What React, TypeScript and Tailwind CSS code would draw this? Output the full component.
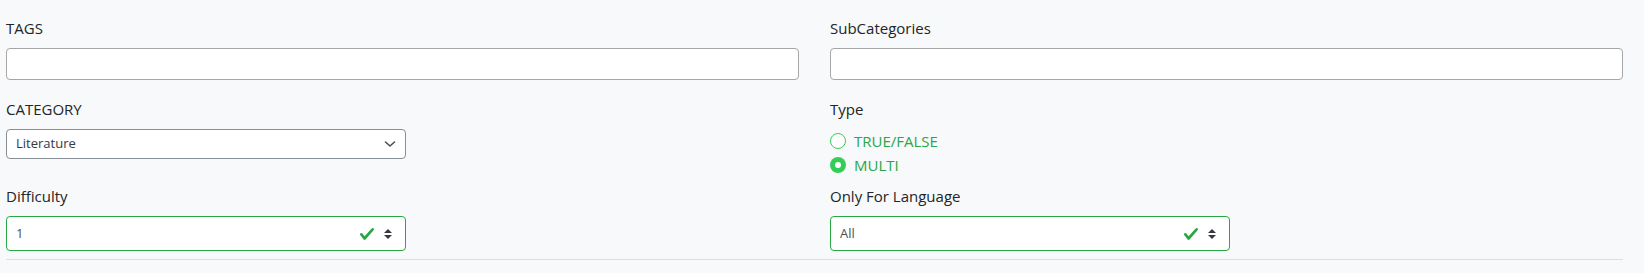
const font = { fontFamily: '"Open Sans", "Noto Sans", sans-serif' }

function Check() {
  return (
    <svg width="16" height="16" viewBox="0 0 8 8" className="shrink-0">
      <path fill="#28a745" d="M2.3 6.73L.6 4.53c-.4-1.04.46-1.4 1.1-.8l1.1 1.4 3.4-3.8c.6-.63 1.6-.27 1.2.7l-4 4.6c-.43.5-.8.4-1.1.1z" />
    </svg>
  )
}

function UpDown() {
  return (
    <svg width="8" height="10" viewBox="0 0 4 5" className="shrink-0">
      <path fill="#343a40" d="M2 0L0 2h4zm0 5L0 3h4z" />
    </svg>
  )
}

function ValidSelect({ value }: { value: string }) {
  return (
    <div className="flex h-[35px] w-[400px] items-center rounded-[4px] border border-[#28a745] bg-white pl-[9px] pr-[13px]">
      <span className="flex-1 text-[13px] text-[#495057]">{value}</span>
      <div className="mr-[9px] mt-[1px]"><Check /></div>
      <UpDown />
    </div>
  )
}

function Label({ children }: { children: React.ReactNode }) {
  return <label className="mb-2 block text-[15px] leading-6 text-[#212529]">{children}</label>
}

function Radio({ label, checked }: { label: string, checked?: boolean }) {
  return (
    <div className="flex h-6 items-center gap-2">
      {checked ? (
        <span className="flex h-4 w-4 items-center justify-center rounded-full bg-[#34ce57]">
          <span className="h-[6px] w-[6px] rounded-full bg-white" />
        </span>
      ) : (
        <span className="h-4 w-4 rounded-full border border-[#34ce57] bg-white" />
      )}
      <span className="text-[15px] text-[#28a745]">{label}</span>
    </div>
  )
}

export default function App() {
  return (
    <div style={font} className="h-[273px] w-full bg-[#f8f9fa] pl-[6px] pr-[21px] pt-4">
      <div className="grid grid-cols-2 gap-x-[31px]">
        <div className="mb-[17px]">
          <Label>TAGS</Label>
          <div className="h-[32px] rounded-[4px] border border-[#a6a6a6] bg-white" />
        </div>
        <div className="mb-[17px]">
          <Label>SubCategories</Label>
          <div className="h-[32px] rounded-[4px] border border-[#a6a6a6] bg-white" />
        </div>

        <div className="mb-[7px]">
          <Label>CATEGORY</Label>
          <div className="flex h-[30px] w-[400px] items-center rounded-[4px] border border-[#868e96] bg-white pl-[9px] pr-[9px]">
            <span className="flex-1 text-[13px] text-[#343a40]">Literature</span>
            <svg width="12" height="8" viewBox="0 0 12 8" fill="none" stroke="#495057" strokeWidth="1.6" strokeLinecap="round" strokeLinejoin="round">
              <path d="M1.5 2l4.5 4 4.5-4" />
            </svg>
          </div>
        </div>
        <div className="mb-[7px]">
          <Label>Type</Label>
          <Radio label="TRUE/FALSE" />
          <Radio label="MULTI" checked />
        </div>

        <div>
          <Label>Difficulty</Label>
          <ValidSelect value="1" />
        </div>
        <div>
          <Label>Only For Language</Label>
          <ValidSelect value="All" />
        </div>
      </div>
      <div className="mt-2 h-px bg-[#dcdfe2]" />
    </div>
  )
}
